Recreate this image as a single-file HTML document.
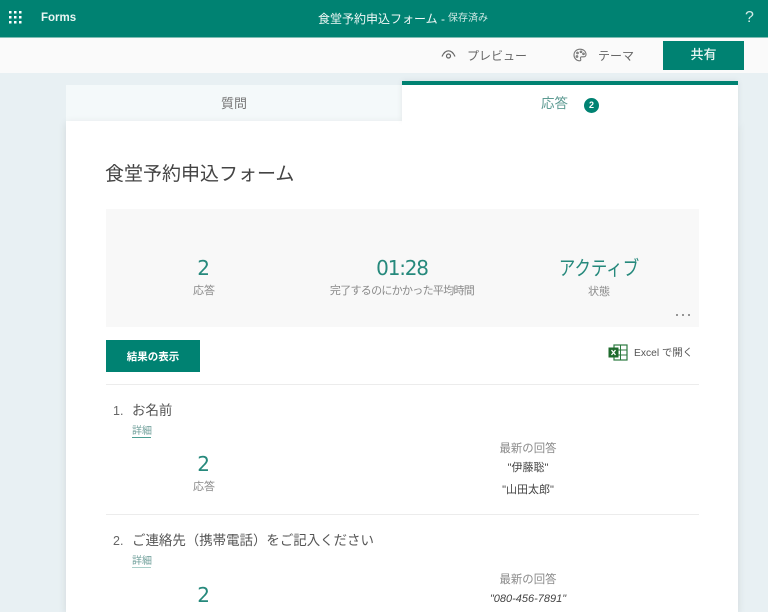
<!DOCTYPE html>
<html lang="ja"><head><meta charset="utf-8">
<style>
html,body{margin:0;padding:0}
body{width:768px;height:612px;overflow:hidden;position:relative;background:#e8f0f3;font-family:"Liberation Sans","Noto Sans CJK JP",sans-serif;color:#555}
div,span.a{position:absolute;white-space:nowrap}
.c{text-align:center}
.num{font-family:"DejaVu Sans","Noto Sans CJK JP",sans-serif;color:#26897c;font-size:20px;line-height:24px;letter-spacing:-1.2px}
.lab{font-size:11px;line-height:16px;color:#8a8a8a}
.lat{font-size:11.4px;line-height:16px;color:#8a8a8a}
.q{font-size:13.45px;line-height:20px;color:#555}
.det{font-size:10px;line-height:11px;color:#6f9f9a;border-bottom:1px solid #4c9e92;left:132px;width:19px}
.ans{font-size:11px;line-height:16px;color:#444}
</style></head><body>
<div style="left:0;top:0;width:768px;height:37px;background:#008272"></div>
<div style="left:0;top:37px;width:768px;height:1px;background:#7fbdb4"></div>
<div style="left:0;top:38px;width:768px;height:35px;background:#fafafa"></div>
<svg style="position:absolute;left:8px;top:10px" width="14" height="14" fill="#fff"><g><rect x="1" y="1" width="2.500" height="2.500"/><rect x="6" y="1" width="2.500" height="2.500"/><rect x="11" y="1" width="2.500" height="2.500"/><rect x="1" y="6" width="2.500" height="2.500"/><rect x="6" y="6" width="2.500" height="2.500"/><rect x="11" y="6" width="2.500" height="2.500"/><rect x="1" y="11" width="2.500" height="2.500"/><rect x="6" y="11" width="2.500" height="2.500"/><rect x="11" y="11" width="2.500" height="2.500"/></g></svg>
<div style="left:41px;top:10px;font-size:11.5px;line-height:17px;font-weight:bold;color:#eaf6f4">Forms</div>
<div style="left:318px;top:10px;font-size:12px;line-height:18px;color:#f2f9f8">食堂予約申込フォーム -</div>
<div style="left:448px;top:11px;font-size:10px;line-height:16px;color:#cfe9e5">保存済み</div>
<div style="left:745px;top:8px;font-size:16px;line-height:20px;color:#d5ebe8">?</div>

<svg style="position:absolute;left:441px;top:48px" width="15" height="14" fill="none" stroke="#666" stroke-width="1.2"><path d="M1 8.500C3 4 5 2.800 7.500 2.800S12 4 14 8.500"/><circle cx="7.500" cy="8" r="2"/></svg>
<div style="left:467px;top:47px;font-size:12px;line-height:18px;color:#666">プレビュー</div>
<svg style="position:absolute;left:573px;top:48px" width="14" height="14" fill="none" stroke="#777" stroke-width="1.1"><path d="M7 1.200C3.500 1.200 1 3.800 1 7s2.600 5.800 5.600 5.800c1.600 0 1.200-1.500.9-2.300-.3-1 .3-1.700 1.400-1.700h2.100c1.200 0 2-1 2-2.300C13 3.200 10.400 1.200 7 1.200z"/><circle cx="4.500" cy="5" r=".8"/><circle cx="8" cy="3.800" r=".8"/><circle cx="10.500" cy="5.800" r=".8"/><circle cx="4" cy="8.500" r=".8"/></svg>
<div style="left:598px;top:47px;font-size:12px;line-height:18px;color:#666">テーマ</div>
<div class="c" style="left:663px;top:41px;width:81px;height:29px;line-height:28px;background:#008272;font-size:13px;color:#e8f5f3;font-weight:500">共有</div>

<div style="left:66px;top:85px;width:336px;height:36px;background:#f4f9fa"></div>
<div class="c" style="left:66px;top:85px;width:336px;line-height:38px;font-size:13px;color:#777">質問</div>
<div style="left:66px;top:121px;width:672px;height:491px;background:#fff;box-shadow:0 2px 8px rgba(0,0,0,.1)"></div>
<div style="left:402px;top:81px;width:336px;height:40px;background:#fff;box-shadow:0 0 6px rgba(0,0,0,.08)"></div>
<div style="left:402px;top:121px;width:336px;height:10px;background:#fff"></div>
<div style="left:402px;top:81px;width:336px;height:4px;background:#008272"></div>
<div style="left:541px;top:95px;font-size:13.5px;line-height:18px;color:#5c9a92">応答</div>
<div class="c" style="left:584px;top:98px;width:15px;height:15px;border-radius:50%;background:#008272;color:#fff;font-size:9px;font-weight:bold;line-height:15px">2</div>

<div style="left:105px;top:162px;font-size:19px;line-height:26px;color:#444">食堂予約申込フォーム</div>

<div style="left:106px;top:209px;width:593px;height:118px;background:#f8f8f8"></div>
<div class="c num" style="left:103px;top:256px;width:200px">2</div>
<div class="c lab" style="left:104px;top:283px;width:200px">応答</div>
<div class="c num" style="left:302px;top:256px;width:200px">01:28</div>
<div class="c lab" style="left:302px;top:283px;width:200px;letter-spacing:-.7px">完了するのにかかった平均時間</div>
<div class="c num" style="left:499px;top:254px;width:200px;font-family:'Noto Sans CJK JP',sans-serif;letter-spacing:0;line-height:26px;transform:scaleX(.82)">アクティブ</div>
<div class="c lab" style="left:499px;top:284px;width:200px">状態</div>
<svg style="position:absolute;left:674px;top:313px" width="18" height="4" fill="#777"><circle cx="3" cy="2" r="1"/><circle cx="9" cy="2" r="1"/><circle cx="15" cy="2" r="1"/></svg>

<div class="c" style="left:106px;top:340px;width:94px;height:32px;line-height:34px;background:#008272;color:#fff;font-size:10.5px;font-weight:bold">結果の表示</div>
<svg style="position:absolute;left:608px;top:344px" width="20" height="18"><rect x="6" y="1" width="13" height="15" fill="#fff" stroke="#2c7a3f" stroke-width="1.2"/><path d="M6 6h13M6 11h13M12.500 1v15" stroke="#2c7a3f" stroke-width="1"/><rect x="0.500" y="3.500" width="10" height="10" fill="#1f6b2e"/><path d="M3.500 6l4 5M7.500 6l-4 5" stroke="#fff" stroke-width="1.300"/></svg>
<div style="left:634px;top:346px;font-size:10.3px;line-height:15px;color:#555">Excel で開く</div>

<div style="left:106px;top:384px;width:593px;height:1px;background:#ececec"></div>

<div style="left:113px;top:401px;font-size:12.5px;line-height:20px;color:#666">1.</div>
<div class="q" style="left:132px;top:401px">お名前</div>
<div class="det" style="top:426px">詳細</div>
<div class="c num" style="left:103px;top:452px;width:200px">2</div>
<div class="c lab" style="left:104px;top:479px;width:200px">応答</div>
<div class="c lat" style="left:428px;top:441px;width:200px">最新の回答</div>
<div class="c ans" style="left:428px;top:460px;width:200px">"伊藤聡"</div>
<div class="c ans" style="left:428px;top:482px;width:200px">"山田太郎"</div>

<div style="left:106px;top:514px;width:593px;height:1px;background:#ececec"></div>

<div style="left:113px;top:531px;font-size:12.5px;line-height:20px;color:#666">2.</div>
<div class="q" style="left:132px;top:531px">ご連絡先（携帯電話）をご記入ください</div>
<div class="det" style="top:556px;border-color:#a9cfc9">詳細</div>
<div class="c num" style="left:103px;top:583px;width:200px">2</div>
<div class="c lat" style="left:428px;top:572px;width:200px">最新の回答</div>
<div class="c ans" style="left:428px;top:591px;width:200px;font-style:italic">"080-456-7891"</div>
</body></html>
